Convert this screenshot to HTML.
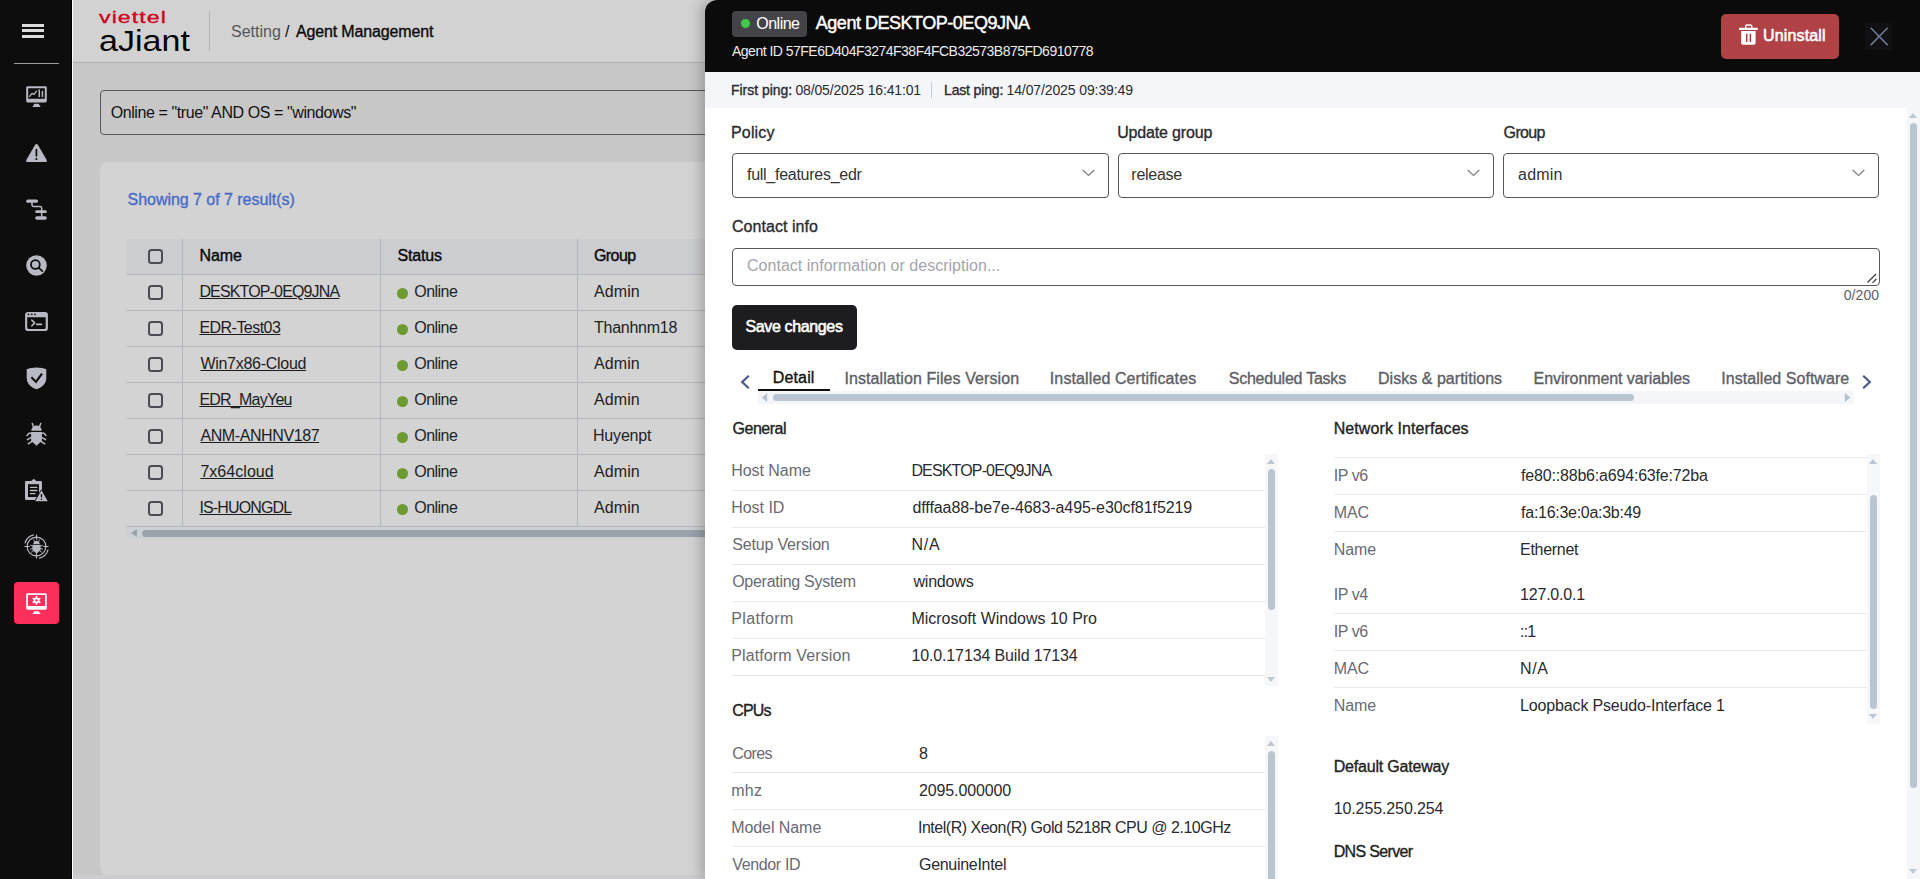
<!DOCTYPE html>
<html lang="en"><head>
<meta charset="utf-8">
<title>Agent Management</title>
<style>
*{box-sizing:border-box;margin:0;padding:0}
html,body{width:1920px;height:879px;overflow:hidden}
body{font-family:"Liberation Sans",sans-serif;font-size:16px;color:#1c1c1e;background:#c7c7c7;position:relative}
.abs{position:absolute}
/* sidebar */
#sidebar{position:absolute;left:0;top:0;width:72px;height:879px;background:#0d0d0d;border-right:1px solid #000}
#sideline{position:absolute;left:72px;top:0;width:1px;height:879px;background:#fff}
#sidebar .ham{position:absolute;left:22px;width:22px;height:3px;background:#dcdcdc}
#sidebar .div{position:absolute;left:14px;top:63px;width:45px;height:1px;background:#9b9b9b}
#sidebar svg{position:absolute;left:0;top:0}
#active{position:absolute;left:14px;top:582px;width:45px;height:42px;border-radius:4px;background:#fb2e5c}
/* topbar */
#topbar{position:absolute;left:73px;top:0;width:1847px;height:62px;background:#d2d2d2;border-bottom:1px solid #b1b1b3;height:63px}
#logo1{position:absolute;left:99px;top:8px;font-weight:normal;-webkit-text-stroke:.32px;letter-spacing:.8px;font-size:17px;line-height:20px;color:#cf001c;transform-origin:0 0;transform:scaleX(1.36);white-space:nowrap}
#logo2{position:absolute;left:99px;top:24px;font-size:30px;line-height:34px;color:#050505;transform-origin:0 0;transform:scaleX(1.135);white-space:nowrap}
#logodiv{position:absolute;left:209px;top:11px;width:1px;height:40px;background:#b3b3b3}
#crumb{position:absolute;left:231px;top:20px;font-size:16px;line-height:24px;white-space:nowrap;color:#0a0a0a}
#crumb .g{color:#55565c}
#crumb b{font-weight:normal;-webkit-text-stroke:.35px}
/* page */
#search{position:absolute;left:100px;top:90px;width:900px;height:45px;border:1px solid #56565c;border-radius:4px;padding-left:10px;font-size:16px;line-height:43px;color:#111;white-space:nowrap}
#card{position:absolute;left:100px;top:162px;width:1700px;height:713px;background:#d3d3d3;border-radius:8px}
#showing{position:absolute;left:127px;top:188px;font-size:16px;line-height:24px;-webkit-text-stroke:.35px;color:#476bc6;white-space:nowrap}
table#agents{position:absolute;left:127px;top:239px;border-collapse:collapse;table-layout:fixed;width:760px;font-size:16px}
#agents th{height:35px;background:#cccdd0;text-align:left;font-weight:normal;-webkit-text-stroke:.4px;color:#0a0a0a;border-left:1px solid #b3b6ba;padding-left:17px}
#agents td{height:36px;border-top:1px solid #b3b6ba;border-left:1px solid #b3b6ba;padding-left:17px;color:#222;white-space:nowrap}
#agents tr:last-child td{border-bottom:1px solid #b3b6ba}
#agents th:first-child,#agents td:first-child{border-left:none;padding-left:21px}
#agents a{color:#1c1c1e;text-decoration:underline;text-underline-offset:1px}
.cb{display:block;width:15px;height:15px;border:2px solid #4b4b52;border-radius:3.5px;position:relative;left:-.5px}
.dot{display:inline-block;width:11px;height:11px;border-radius:50%;background:#6b9a2f;margin-right:7px;margin-left:-1px;vertical-align:-2px}
#hscroll{position:absolute;left:127px;top:527px;width:700px;height:12px;background:#cdd0d4}
#hscroll i{position:absolute;left:15px;top:3px;width:700px;height:7px;border-radius:4px;background:#9aa3ab}
#hscroll b{position:absolute;left:4px;top:1.5px;width:0;height:0;border:4.5px solid transparent;border-right:6px solid #9aa3ab;border-left:none}
/* drawer */
#drawer{position:absolute;left:705px;top:0;width:1215px;height:879px;background:#fff;border-top-left-radius:12px;box-shadow:-4px 0 14px rgba(0,0,0,.24);overflow:hidden}
#dhead{position:absolute;left:0;top:0;width:1215px;height:72px;background:#0b0b0c}
#badge{position:absolute;left:27px;top:11px;width:75px;height:26px;border-radius:4px;background:#444448;color:#fff;font-size:16px;line-height:26px;padding-left:24px;white-space:nowrap}
#badge i{position:absolute;left:9px;top:8px;width:9px;height:9px;border-radius:50%;background:#3fc84a}
#dtitle{position:absolute;left:111px;top:10px;font-size:18px;line-height:26px;-webkit-text-stroke:.45px;color:#fff;white-space:nowrap}
#did{position:absolute;left:27px;top:41px;font-size:14px;line-height:20px;color:#ececec;white-space:nowrap}
#uninstall{position:absolute;left:1016px;top:14px;width:118px;height:45px;border-radius:5px;background:#b04144;color:#fff;-webkit-text-stroke:.55px;font-size:16px;line-height:43px;padding-left:43px;white-space:nowrap}
#ping{position:absolute;left:0;top:72px;width:1215px;height:36px;background:#f5f6fa;font-size:14px;line-height:36px;color:#2a2a2e;white-space:nowrap}
#ping b{font-weight:normal;-webkit-text-stroke:.35px}
#ping .p{position:absolute;top:0}
#ping em{position:absolute;left:226px;top:10px;width:1px;height:16px;background:#c9c9cf}
.lbl{position:absolute;font-size:16px;line-height:24px;-webkit-text-stroke:.35px;color:#2b2b2f;white-space:nowrap}
.sel{position:absolute;top:153px;width:375.67px;height:45px;border:1px solid #56565c;border-radius:4px;padding-left:14px;font-size:16px;line-height:42px;color:#333;white-space:nowrap}
.sel svg{position:absolute;right:13px;top:15px}
#ta{position:absolute;left:27px;top:248px;width:1148px;height:38px;border:1px solid #56565c;border-radius:4px;padding-left:14px;font-size:16px;line-height:34px;color:#a4a4ac;white-space:nowrap}
#cnt{position:absolute;left:1100px;width:75px;text-align:right;top:285px;font-size:14px;line-height:20px;color:#5e5e66}
#save{position:absolute;left:27px;top:305px;width:125px;height:45px;border-radius:5px;background:#1d1d20;color:#fff;-webkit-text-stroke:.55px;font-size:16px;line-height:44px;text-align:center;white-space:nowrap}
.tab{position:absolute;top:367px;font-size:16px;line-height:24px;color:#5d5e66;white-space:nowrap;-webkit-text-stroke:.35px}
.tab.on{color:#111;-webkit-text-stroke:.35px;top:366px}
#tabline{position:absolute;left:53px;top:389px;width:72px;height:2px;background:#111}
#tscroll{position:absolute;left:53px;top:391px;width:1095px;height:13px;background:#f3f5f8}
#tscroll i{position:absolute;left:15px;top:3px;width:861px;height:7px;border-radius:4px;background:#b9c5d0}
.h{position:absolute;font-size:16px;line-height:24px;-webkit-text-stroke:.35px;color:#222;white-space:nowrap}
.kv{position:absolute;font-size:16px;line-height:24px;white-space:nowrap}
.k{color:#6a6a72}.v{color:#2a2a2e}
.ln{position:absolute;height:1px;background:#eaeaee}
.vs{position:absolute;width:13px;background:#f6f7f9}
.vs i{position:absolute;left:3px;width:7px;border-radius:4px;background:#b9c5d0}
.vs .up,.vs .dn{position:absolute;left:1.8px;width:0;height:0;border:4.7px solid transparent}
.vs .up{border-bottom:5.5px solid #bcc7d1;border-top:none;margin-top:-.5px}
.vs .dn{border-top:5.5px solid #bcc7d1;border-bottom:none;margin-top:1px}
</style>
</head>
<body>
<!-- PAGE (dimmed behind drawer) -->
<header id="topbar"></header>
<div id="logo1">viettel</div>
<div id="logo2">aJiant</div>
<div id="logodiv"></div>
<div id="crumb"><span class="g"><span style="letter-spacing: 0.01px; position: relative; left: 0px;">Setting</span></span><span style="letter-spacing: 0px; position: relative; left: -0.3px;"> / </span><b><span style="letter-spacing: -0.15px; position: relative; left: 1.7px;">Agent Management</span></b></div>

<div id="search"><span style="letter-spacing: -0.41px; position: relative; left: -0.3px;">Online = "true" AND OS = "windows"</span></div>
<section id="card"></section>
<div class="abs" style="left:73px;top:875px;width:1847px;height:4px;background:#cbcbd0"></div>
<div id="showing"><span style="letter-spacing: -0.04px; position: relative; left: 0.6px;">Showing 7 of 7 result(s)</span></div>
<table id="agents">
<colgroup><col style="width:55px"><col style="width:198px"><col style="width:197px"><col style="width:310px"></colgroup>
<thead><tr><th><span class="cb"></span></th><th><span style="letter-spacing: -0.06px; position: relative; left: -0.1px;">Name</span></th><th><span style="letter-spacing: -0.17px; position: relative; left: 0px;">Status</span></th><th><span style="letter-spacing: -0.59px; position: relative; left: -0.5px;">Group</span></th></tr></thead>
<tbody>
<tr><td><span class="cb"></span></td><td><a><span style="letter-spacing: -0.85px; position: relative; left: -0.1px;">DESKTOP-0EQ9JNA</span></a></td><td><span class="dot"></span><span style="letter-spacing: -0.55px; position: relative; left: -0.2px;">Online</span></td><td><span style="letter-spacing: 0.09px; position: relative; left: -0.5px;">Admin</span></td></tr>
<tr><td><span class="cb"></span></td><td><a><span style="letter-spacing: -0.53px; position: relative; left: -0.1px;">EDR-Test03</span></a></td><td><span class="dot"></span><span style="letter-spacing: -0.55px; position: relative; left: -0.2px;">Online</span></td><td><span style="letter-spacing: -0.25px; position: relative; left: -0.5px;">Thanhnm18</span></td></tr>
<tr><td><span class="cb"></span></td><td><a><span style="letter-spacing: -0.28px; position: relative; left: 0.9px;">Win7x86-Cloud</span></a></td><td><span class="dot"></span><span style="letter-spacing: -0.55px; position: relative; left: -0.2px;">Online</span></td><td><span style="letter-spacing: 0.09px; position: relative; left: -0.5px;">Admin</span></td></tr>
<tr><td><span class="cb"></span></td><td><a><span style="letter-spacing: -0.76px; position: relative; left: -0.1px;">EDR_MayYeu</span></a></td><td><span class="dot"></span><span style="letter-spacing: -0.55px; position: relative; left: -0.2px;">Online</span></td><td><span style="letter-spacing: 0.09px; position: relative; left: -0.5px;">Admin</span></td></tr>
<tr><td><span class="cb"></span></td><td><a><span style="letter-spacing: -0.4px; position: relative; left: 0.9px;">ANM-ANHNV187</span></a></td><td><span class="dot"></span><span style="letter-spacing: -0.55px; position: relative; left: -0.2px;">Online</span></td><td><span style="letter-spacing: -0.19px; position: relative; left: -1.5px;">Huyenpt</span></td></tr>
<tr><td><span class="cb"></span></td><td><a><span style="letter-spacing: 0.04px; position: relative; left: 0.9px;">7x64cloud</span></a></td><td><span class="dot"></span><span style="letter-spacing: -0.55px; position: relative; left: -0.2px;">Online</span></td><td><span style="letter-spacing: 0.09px; position: relative; left: -0.5px;">Admin</span></td></tr>
<tr><td><span class="cb"></span></td><td><a><span style="letter-spacing: -0.85px; position: relative; left: -0.1px;">IS-HUONGDL</span></a></td><td><span class="dot"></span><span style="letter-spacing: -0.55px; position: relative; left: -0.2px;">Online</span></td><td><span style="letter-spacing: 0.09px; position: relative; left: -0.5px;">Admin</span></td></tr>
</tbody>
</table>
<div id="hscroll"><b></b><i></i></div>

<!-- SIDEBAR -->
<nav id="sidebar">
<div class="ham" style="top:24px"></div><div class="ham" style="top:29px"></div><div class="ham" style="top:35px"></div>
<div class="div"></div>
<div id="active"></div>
<!--ICONS-START-->
<svg width="72" height="879" viewBox="0 0 72 879" fill="none">
<g fill="#b9b9c3" stroke="none">
<!-- 1 monitor chart -->
<path fill-rule="evenodd" d="M27.6 86.2h17.8a1.4 1.4 0 0 1 1.4 1.4v13.5a1.4 1.4 0 0 1-1.4 1.4H27.6a1.4 1.4 0 0 1-1.4-1.4V87.6a1.4 1.4 0 0 1 1.4-1.4zM28.2 88.2v10.6h16.6V88.2z"></path>
<path d="M34.4 103.8h4.2l2 3.2h-8.2z"></path>
<!-- 2 warning -->
<path d="M35.3 144.6a1.4 1.4 0 0 1 2.4 0l9 15.4a1.4 1.4 0 0 1-1.2 2.1H27.5a1.4 1.4 0 0 1-1.2-2.1z"></path>
<!-- 3 tree -->
<rect x="26.2" y="199.5" width="11.8" height="3.3" rx="1.6"></rect>
<rect x="35.2" y="210.2" width="11.6" height="2.9" rx="1.4"></rect>
<rect x="35.2" y="216.2" width="11.6" height="3.6" rx="1.7"></rect>
<!-- 4 search disc -->
<circle cx="36.5" cy="265.5" r="10.3"></circle>
<!-- 5 terminal -->
<path fill-rule="evenodd" d="M27.9 311.9h17.2a2.8 2.8 0 0 1 2.8 2.8v13.6a2.8 2.8 0 0 1-2.8 2.8H27.9a2.8 2.8 0 0 1-2.8-2.8v-13.6a2.8 2.8 0 0 1 2.8-2.8zM27.2 317.2v10.4a1.3 1.3 0 0 0 1.3 1.3h15.9a1.3 1.3 0 0 0 1.3-1.3v-10.4z"></path>
<!-- 6 shield -->
<path d="M36.5 367.5c3.6 0 7 .7 9.8 1.8v8.6c0 5.3-4 9.3-9.8 11.4-5.800-2.100-9.800-6.100-9.800-11.400v-8.600c2.800-1.100 6.200-1.800 9.800-1.800z"></path>
<!-- 7 bug -->
<path d="M31.300 430.800c0-2.900 2.300-5.200 5.200-5.200s5.200 2.300 5.200 5.200z"></path>
<path d="M31.100 432h10.800v8.700l-5.400 5.100-5.400-5.100z"></path>
<!-- 8 clipboard -->
<path fill-rule="evenodd" d="M26.300 481h4.900l2.300-2.100h0.500l2.300 2.100h4.400a1.300 1.300 0 0 1 1.300 1.300v16.400a1.300 1.300 0 0 1-1.300 1.300H26.300a1.300 1.300 0 0 1-1.300-1.300v-16.400a1.300 1.300 0 0 1 1.300-1.300zM28 484.300v12.700h11v-12.700z"></path>
<!-- 9 bug target: small bug -->
<path d="M33.300 543.900c0-1.800 1.400-3.100 3.200-3.100s3.200 1.300 3.200 3.100z"></path>
<path d="M32.500 544.800h8v5.400l-4 3.200-4-3.200z"></path>
</g>
<g stroke="#b9b9c3" fill="none" stroke-linecap="round" stroke-linejoin="round">
<!-- 1 chart line & bars -->
<path d="M29.600 96.400l2.500-3.100 1.900 1 2.500-3.200" stroke-width="1.300"></path>
<path d="M39.300 89.900v6.500M42.400 91.600v4.900" stroke-width="1.500"></path>
<!-- 3 tree connector -->
<path d="M32 202.500v2.300a1.700 1.700 0 0 0 1.700 1.700h6.300a1.700 1.700 0 0 1 1.700 1.700v8" stroke-width="1.500"></path>
<!-- 5 terminal prompt -->
<path d="M31.800 320.100l2.900 2.700-2.800 3M36.600 324.400h4.900" stroke-width="1.600"></path>
<!-- 7 bug legs/antennae -->
<path d="M33.400 426.500l-1.100-3.100M39.600 426.500l1.100-3.100" stroke-width="1.500"></path>
<path d="M31 433.300h-2l-2 2.100M31 437.600l-3.600 2M32 441.300l-3.700 2.500M42 433.300h2l2 2.100M42 437.600l3.600 2M41 441.300l3.700 2.500" stroke-width="1.500"></path>
<!-- 8 clipboard lines -->
<path d="M30.400 487.300h6.500M30.400 490.500h6.500M30.400 493.700h4.600" stroke-width="1.300"></path>
<!-- 9 target -->
<circle cx="36.500" cy="546.500" r="9.400" stroke-width="1.200"></circle>
<path d="M36.500 535v4.300M36.500 553.700v4.300M25 546.500h4.300M43.700 546.500h4.300" stroke-width="1.200"></path>
<path d="M25 543a12 12 0 0 1 8.500-8.100M48 550a12 12 0 0 1-8.500 8.100" stroke-width="1.100"></path>
<path d="M34.300 541.300l-.6-1.400M38.700 541.300l.6-1.400M32.800 546.200l-2.200-.9M32.800 548.400l-2.200.7M33.400 550.600l-1.900 1.500M40.200 546.200l2.200-.9M40.200 548.400l2.200.7M39.600 550.600l1.900 1.500" stroke-width="1"></path>
</g>
<g stroke="#0c0c0d" fill="none" stroke-linecap="round" stroke-linejoin="round">
<!-- 2 exclamation -->
<path d="M36.400 149.500v6.300" stroke-width="1.700"></path>
<circle cx="36.400" cy="159" r="1.100" fill="#0c0c0d" stroke="none"></circle>
<!-- 4 magnifier -->
<circle cx="35.400" cy="264.500" r="4.400" stroke-width="1.700"></circle>
<path d="M38.800 267.800l3.500 3.300" stroke-width="1.700"></path>
<!-- 5 dots -->
<circle cx="28.500" cy="314.300" r=".9" fill="#0c0c0d" stroke="none"></circle><circle cx="31.800" cy="314.300" r=".9" fill="#0c0c0d" stroke="none"></circle><circle cx="35" cy="314.300" r=".9" fill="#0c0c0d" stroke="none"></circle>
<!-- 6 check -->
<path d="M31.400 377.200l4.600 4.700 6-8.300" stroke-width="2.100" stroke-linecap="butt" stroke-linejoin="miter"></path>
</g>
<!-- 8 warning tri on clipboard -->
<path d="M41.500 490.300l6.300 10.900H35.200z" fill="#b9b9c3" stroke="#0c0c0d" stroke-width="1.600" stroke-linejoin="round" paint-order="stroke"></path>
<path d="M41.500 494.200v3.200" stroke="#0c0c0d" stroke-width="1.400"></path>
<circle cx="41.500" cy="499.200" r=".8" fill="#0c0c0d"></circle>
<!-- 10 active: monitor gear (white) -->
<g fill="#fff">
<path fill-rule="evenodd" d="M27.600 593.200h17.800a1.400 1.400 0 0 1 1.400 1.400v13.700a1.400 1.400 0 0 1-1.400 1.400H27.600a1.400 1.400 0 0 1-1.400-1.400v-13.700a1.400 1.400 0 0 1 1.400-1.400zM28 595v11h17v-11z"></path>
<path d="M34.400 611.200h4.200l2 2.900h-8.200z"></path>
<path fill-rule="evenodd" d="M35.53 597.56 L35.78 595.96 L37.22 595.96 L37.47 597.56 L38.47 598.14 L39.99 597.56 L40.71 598.80 L39.44 599.82 L39.44 600.98 L40.71 602.00 L39.99 603.24 L38.47 602.66 L37.47 603.24 L37.22 604.84 L35.78 604.84 L35.53 603.24 L34.53 602.66 L33.01 603.24 L32.29 602.00 L33.56 600.98 L33.56 599.82 L32.29 598.80 L33.01 597.56 L34.53 598.14Z M36.50 599.20a1.2 1.2 0 1 0 0 2.4a1.2 1.2 0 1 0 0-2.4z"></path>
</g>
</svg>
<!--ICONS-END-->
</nav>
<div id="sideline"></div>

<!-- DRAWER -->
<aside id="drawer">
<div id="dhead">
<div id="badge"><i></i><span style="letter-spacing: -0.52px; position: relative; left: 0.3px;">Online</span></div>
<div id="dtitle"><span style="letter-spacing: -0.48px; position: relative; left: -0.2px;">Agent DESKTOP-0EQ9JNA</span></div>
<div id="did"><span style="letter-spacing: -0.51px; position: relative; left: 0px;">Agent ID 57FE6D404F3274F38F4FCB32573B875FD6910778</span></div>
<div id="uninstall"><span style="letter-spacing: 0.15px; position: relative; left: -1px;">Uninstall</span></div>
<svg class="abs" style="left:0;top:0" width="1215" height="72" viewBox="0 0 1215 72" fill="none">
<path d="M1040.700 28.200v-1.800a1.400 1.400 0 0 1 1.400-1.400h3.300a1.400 1.400 0 0 1 1.400 1.400v1.800" stroke="#fff" stroke-width="1.400"></path>
<rect x="1034" y="27.800" width="18.800" height="2.200" rx=".6" fill="#fff"></rect>
<path fill-rule="evenodd" fill="#fff" d="M1036.200 31.100h14.400v12.000a1.700 1.700 0 0 1-1.700 1.700h-11.000a1.700 1.700 0 0 1-1.700-1.700zM1040.900 33.800v8.200h1.600v-8.200zM1044.600 33.800v8.200h1.600v-8.200z"></path>
<rect x="1160" y="23" width="27" height="27" fill="#111113"></rect>
<path d="M1165.700 27.800l17 17.300M1182.700 27.800l-17 17.300" stroke="#6c7b97" stroke-width="1.500"></path>
</svg>
</div>
<div id="ping"><span class="p" style="left:27px"><b><span style="letter-spacing: -0.03px; position: relative; left: -1px;">First ping:</span></b><span style="letter-spacing: -0.16px; position: relative; left: -1.4px;"> 08/05/2025 16:41:01</span></span><em></em><span class="p" style="left:240px"><b><span style="letter-spacing: -0.15px; position: relative; left: -1px;">Last ping:</span></b><span style="letter-spacing: -0.11px; position: relative; left: -1.5px;"> 14/07/2025 09:39:49</span></span></div>
<!--BODY-START-->
<div class="lbl" style="left:27px;top:121px"><span style="letter-spacing: 0.16px; position: relative; left: -1px;">Policy</span></div>
<div class="lbl" style="left:413px;top:121px"><span style="letter-spacing: -0.17px; position: relative; left: -0.8px;">Update group</span></div>
<div class="lbl" style="left:799px;top:121px"><span style="letter-spacing: -0.67px; position: relative; left: -0.4px;">Group</span></div>
<div class="sel" style="left:27px;width:376.7px"><span style="letter-spacing: -0.27px; position: relative; left: 0px;">full_features_edr</span><svg width="13" height="8" viewBox="0 0 13 8"><path d="M0.7 0.9 L6.5 6.4 L12.3 0.9" fill="none" stroke="#83838b" stroke-width="1.4"></path></svg></div>
<div class="sel" style="left:413px;width:375.5px"><span style="letter-spacing: -0.26px; position: relative; left: -1.7px;">release</span><svg width="13" height="8" viewBox="0 0 13 8"><path d="M0.7 0.9 L6.5 6.4 L12.3 0.9" fill="none" stroke="#83838b" stroke-width="1.4"></path></svg></div>
<div class="sel" style="left:798.33px"><span style="letter-spacing: 0.21px; position: relative; left: -0.3px;">admin</span><svg width="13" height="8" viewBox="0 0 13 8"><path d="M0.7 0.9 L6.5 6.4 L12.3 0.9" fill="none" stroke="#83838b" stroke-width="1.4"></path></svg></div>
<div class="lbl" style="left:27px;top:215px"><span style="letter-spacing: 0.05px; position: relative; left: 0px;">Contact info</span></div>
<div id="ta"><span style="letter-spacing: 0.02px; position: relative; left: 0px;">Contact information or description...</span><svg class="abs" style="right:1px;bottom:1px" width="11" height="11" viewBox="0 0 11 11"><path d="M0.5 9.5 L9 1 M5.5 9.8 L9.3 6" stroke="#3a3a3e" stroke-width="1.2" fill="none"></path></svg></div>
<div id="cnt"><span style="letter-spacing: 0.06px; position: relative; left: -0.9px;">0/200</span></div>
<div id="save"><span style="letter-spacing: -0.36px; position: relative; left: -0.5px;">Save changes</span></div>

<svg class="abs" style="left:34px;top:373.5px" width="12" height="16" viewBox="0 0 12 16"><path d="M9.8 1.8 L3.2 8 L9.8 14.2" fill="none" stroke="#4a5a84" stroke-width="2.2"></path></svg>
<div class="tab on" style="left:69px"><span style="letter-spacing: 0.13px; position: relative; left: -1.2px;">Detail</span></div>
<div class="tab" style="left:140px"><span style="letter-spacing: 0.08px; position: relative; left: -0.5px;">Installation Files Version</span></div>
<div class="tab" style="left:345px"><span style="letter-spacing: 0.11px; position: relative; left: -0.2px;">Installed Certificates</span></div>
<div class="tab" style="left:523px"><span style="letter-spacing: -0.23px; position: relative; left: 0.7px;">Scheduled Tasks</span></div>
<div class="tab" style="left:673px"><span style="letter-spacing: 0.03px; position: relative; left: 0px;">Disks &amp; partitions</span></div>
<div class="tab" style="left:829px"><span style="letter-spacing: -0.09px; position: relative; left: -0.4px;">Environment variables</span></div>
<div class="tab" style="left:1017px"><span style="letter-spacing: 0.04px; position: relative; left: -0.7px;">Installed Software</span></div>
<svg class="abs" style="left:1156px;top:373.5px" width="12" height="16" viewBox="0 0 12 16"><path d="M2.2 1.8 L8.8 8 L2.2 14.2" fill="none" stroke="#4a5a84" stroke-width="2.2"></path></svg>
<div id="tabline"></div>
<div id="tscroll"><svg class="abs" style="left:3px;top:2px" width="7" height="9" viewBox="0 0 7 9"><path d="M6.2 0 L0.6 4.5 L6.2 9 Z" fill="#b6c2cd"></path></svg><i></i><svg class="abs" style="left:1086px;top:2px" width="7" height="9" viewBox="0 0 7 9"><path d="M0.8 0 L6.4 4.5 L0.8 9 Z" fill="#b6c2cd"></path></svg></div>

<!-- General -->
<div class="h" style="left:27px;top:417px"><span style="letter-spacing: -0.48px; position: relative; left: 0.5px;">General</span></div>
<div class="kv k" style="left:27px;top:459px"><span style="letter-spacing: -0.04px; position: relative; left: -0.8px;">Host Name</span></div><div class="kv v" style="left:207px;top:459px"><span style="letter-spacing: -0.85px; position: relative; left: -0.6px;">DESKTOP-0EQ9JNA</span></div>
<div class="ln" style="left:27px;top:490px;width:533px"></div>
<div class="kv k" style="left:27px;top:496px"><span style="letter-spacing: -0.03px; position: relative; left: -0.8px;">Host ID</span></div><div class="kv v" style="left:207px;top:496px"><span style="letter-spacing: -0.07px; position: relative; left: 0.4px;">dfffaa88-be7e-4683-a495-e30cf81f5219</span></div>
<div class="ln" style="left:27px;top:527px;width:533px"></div>
<div class="kv k" style="left:27px;top:533px"><span style="letter-spacing: -0.17px; position: relative; left: 0.2px;">Setup Version</span></div><div class="kv v" style="left:207px;top:533px"><span style="letter-spacing: 0.75px; position: relative; left: -0.6px;">N/A</span></div>
<div class="ln" style="left:27px;top:564px;width:533px"></div>
<div class="kv k" style="left:27px;top:570px"><span style="letter-spacing: -0.28px; position: relative; left: 0.2px;">Operating System</span></div><div class="kv v" style="left:207px;top:570px"><span style="letter-spacing: -0.18px; position: relative; left: 1.4px;">windows</span></div>
<div class="ln" style="left:27px;top:601px;width:533px"></div>
<div class="kv k" style="left:27px;top:607px"><span style="letter-spacing: 0.35px; position: relative; left: -0.8px;">Platform</span></div><div class="kv v" style="left:207px;top:607px"><span style="letter-spacing: -0.01px; position: relative; left: -0.6px;">Microsoft Windows 10 Pro</span></div>
<div class="ln" style="left:27px;top:638px;width:533px"></div>
<div class="kv k" style="left:27px;top:644px"><span style="letter-spacing: 0.12px; position: relative; left: -0.8px;">Platform Version</span></div><div class="kv v" style="left:207px;top:644px"><span style="letter-spacing: -0.13px; position: relative; left: -0.6px;">10.0.17134 Build 17134</span></div>
<div class="ln" style="left:27px;top:675px;width:533px"></div>
<div class="vs" style="left:560px;top:454px;height:232px"><b class="up" style="top:5px"></b><i style="top:15px;height:141px"></i><b class="dn" style="top:222px"></b></div>

<!-- CPUs -->
<div class="h" style="left:27px;top:699px"><span style="letter-spacing: -0.85px; position: relative; left: 0.2px;">CPUs</span></div>
<div class="kv k" style="left:27px;top:742px"><span style="letter-spacing: -0.57px; position: relative; left: 0.2px;">Cores</span></div><div class="kv v" style="left:214px;top:742px"><span style="letter-spacing: 0px; position: relative; left: 0px;">8</span></div>
<div class="ln" style="left:27px;top:772px;width:533px"></div>
<div class="kv k" style="left:27px;top:779px"><span style="letter-spacing: 0.24px; position: relative; left: -0.8px;">mhz</span></div><div class="kv v" style="left:214px;top:779px"><span style="letter-spacing: -0.13px; position: relative; left: 0px;">2095.000000</span></div>
<div class="ln" style="left:27px;top:809px;width:533px"></div>
<div class="kv k" style="left:27px;top:816px"><span style="letter-spacing: -0.07px; position: relative; left: -0.8px;">Model Name</span></div><div class="kv v" style="left:214px;top:816px"><span style="letter-spacing: -0.49px; position: relative; left: -1px;">Intel(R) Xeon(R) Gold 5218R CPU @ 2.10GHz</span></div>
<div class="ln" style="left:27px;top:846px;width:533px"></div>
<div class="kv k" style="left:27px;top:853px"><span style="letter-spacing: -0.34px; position: relative; left: 0.2px;">Vendor ID</span></div><div class="kv v" style="left:214px;top:853px"><span style="letter-spacing: -0.3px; position: relative; left: 0px;">GenuineIntel</span></div>
<div class="vs" style="left:560px;top:736px;height:160px"><b class="up" style="top:5px"></b><i style="top:15px;height:160px"></i></div>

<!-- Network Interfaces -->
<div class="h" style="left:629px;top:417px"><span style="letter-spacing: 0.09px; position: relative; left: -0.3px;">Network Interfaces</span></div>
<div class="ln" style="left:629px;top:457px;width:533px"></div>
<div class="kv k" style="left:629px;top:464px"><span style="letter-spacing: -0.44px; position: relative; left: -0.3px;">IP v6</span></div><div class="kv v" style="left:816px;top:464px"><span style="letter-spacing: -0.19px; position: relative; left: 0.1px;">fe80::88b6:a694:63fe:72ba</span></div>
<div class="ln" style="left:629px;top:494px;width:533px"></div>
<div class="kv k" style="left:629px;top:501px"><span style="letter-spacing: -0.1px; position: relative; left: -0.3px;">MAC</span></div><div class="kv v" style="left:816px;top:501px"><span style="letter-spacing: -0.28px; position: relative; left: 0.1px;">fa:16:3e:0a:3b:49</span></div>
<div class="ln" style="left:629px;top:531px;width:533px"></div>
<div class="kv k" style="left:629px;top:538px"><span style="letter-spacing: -0.06px; position: relative; left: -0.3px;">Name</span></div><div class="kv v" style="left:816px;top:538px"><span style="letter-spacing: -0.31px; position: relative; left: -0.9px;">Ethernet</span></div>
<div class="kv k" style="left:629px;top:583px"><span style="letter-spacing: -0.44px; position: relative; left: -0.3px;">IP v4</span></div><div class="kv v" style="left:816px;top:583px"><span style="letter-spacing: -0.22px; position: relative; left: -0.9px;">127.0.0.1</span></div>
<div class="ln" style="left:629px;top:613px;width:533px"></div>
<div class="kv k" style="left:629px;top:620px"><span style="letter-spacing: -0.44px; position: relative; left: -0.3px;">IP v6</span></div><div class="kv v" style="left:816px;top:620px"><span style="letter-spacing: -0.85px; position: relative; left: -0.9px;">::1</span></div>
<div class="ln" style="left:629px;top:650px;width:533px"></div>
<div class="kv k" style="left:629px;top:657px"><span style="letter-spacing: -0.1px; position: relative; left: -0.3px;">MAC</span></div><div class="kv v" style="left:816px;top:657px"><span style="letter-spacing: 0.6px; position: relative; left: -0.9px;">N/A</span></div>
<div class="ln" style="left:629px;top:687px;width:533px"></div>
<div class="kv k" style="left:629px;top:694px"><span style="letter-spacing: -0.06px; position: relative; left: -0.3px;">Name</span></div><div class="kv v" style="left:816px;top:694px"><span style="letter-spacing: -0.16px; position: relative; left: -0.9px;">Loopback Pseudo-Interface 1</span></div>
<div class="vs" style="left:1162px;top:454px;height:270px"><b class="up" style="top:5px"></b><i style="top:41px;height:214px"></i><b class="dn" style="top:259px"></b></div>

<div class="h" style="left:629px;top:755px"><span style="letter-spacing: -0.2px; position: relative; left: -0.3px;">Default Gateway</span></div>
<div class="kv v" style="left:629px;top:797px"><span style="letter-spacing: -0.11px; position: relative; left: -0.3px;">10.255.250.254</span></div>
<div class="h" style="left:629px;top:840px"><span style="letter-spacing: -0.66px; position: relative; left: -0.3px;">DNS Server</span></div>

<!-- main scrollbar -->
<div class="vs" style="left:1202px;top:108px;height:771px;background:#f5f6fa"><b class="up" style="top:5px"></b><i style="left:2.5px;width:7.5px;top:15px;height:665px"></i><b class="dn" style="top:760px"></b></div>
<!--BODY-END-->
</aside>


</body></html>
